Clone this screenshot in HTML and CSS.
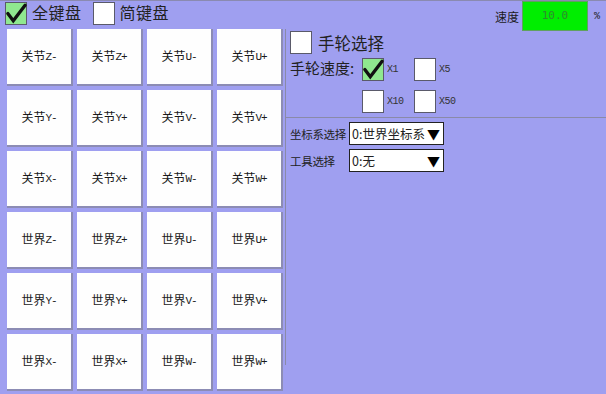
FILE: index.html
```html
<!DOCTYPE html>
<html>
<head>
<meta charset="utf-8">
<link rel="stylesheet" href="styles.css">
</head>
<body>
<div class="screen">
  <div class="topbar">
    <div class="chk on big"><svg viewBox="0 0 22 22"><polyline points="2,11 8,19 21,2" /></svg></div>
    <span class="lbl big-lbl">全键盘</span>
    <div class="chk big gap"></div>
    <span class="lbl big-lbl">简键盘</span>
    <div class="spacer"></div>
    <span class="speed-lbl">速度</span>
    <div class="speed-box">10.0</div>
    <span class="pct">%</span>
  </div>
  <div class="main">
    <div class="grid">
      <button class="key"><span>关节<i>Z-</i></span></button>
      <button class="key"><span>关节<i>Z+</i></span></button>
      <button class="key"><span>关节<i>U-</i></span></button>
      <button class="key"><span>关节<i>U+</i></span></button>
      <button class="key"><span>关节<i>Y-</i></span></button>
      <button class="key"><span>关节<i>Y+</i></span></button>
      <button class="key"><span>关节<i>V-</i></span></button>
      <button class="key"><span>关节<i>V+</i></span></button>
      <button class="key"><span>关节<i>X-</i></span></button>
      <button class="key"><span>关节<i>X+</i></span></button>
      <button class="key"><span>关节<i>W-</i></span></button>
      <button class="key"><span>关节<i>W+</i></span></button>
      <button class="key"><span>世界<i>Z-</i></span></button>
      <button class="key"><span>世界<i>Z+</i></span></button>
      <button class="key"><span>世界<i>U-</i></span></button>
      <button class="key"><span>世界<i>U+</i></span></button>
      <button class="key"><span>世界<i>Y-</i></span></button>
      <button class="key"><span>世界<i>Y+</i></span></button>
      <button class="key"><span>世界<i>V-</i></span></button>
      <button class="key"><span>世界<i>V+</i></span></button>
      <button class="key"><span>世界<i>X-</i></span></button>
      <button class="key"><span>世界<i>X+</i></span></button>
      <button class="key"><span>世界<i>W-</i></span></button>
      <button class="key"><span>世界<i>W+</i></span></button>
    </div>
    <div class="panel">
      <div class="wheel">
        <div class="row-sel">
          <div class="chk big"></div>
          <span class="lbl wheel-lbl">手轮选择</span>
        </div>
        <div class="speeds">
          <span class="lbl speed-title">手轮速度:</span>
          <div class="opts">
            <div class="opt"><div class="chk on big"><svg viewBox="0 0 22 22"><polyline points="2,11 8,19 21,2" /></svg></div><span class="x">X1</span></div>
            <div class="opt"><div class="chk big"></div><span class="x">X5</span></div>
            <div class="opt"><div class="chk big"></div><span class="x">X10</span></div>
            <div class="opt"><div class="chk big"></div><span class="x">X50</span></div>
          </div>
        </div>
      </div>
      <div class="selects">
        <div class="sel-row">
          <span class="sel-lbl">坐标系选择</span>
          <div class="select"><span>0:世界坐标系</span><span class="arrow">▼</span></div>
        </div>
        <div class="sel-row">
          <span class="sel-lbl">工具选择</span>
          <div class="select"><span>0:无</span><span class="arrow">▼</span></div>
        </div>
      </div>
    </div>
  </div>
</div>
</body>
</html>
```

FILE: styles.css
```css
* { box-sizing: border-box; }
html, body {
  margin: 0;
  padding: 0;
  background: #9f9ff0;
}
body {
  width: 606px;
  height: 394px;
  overflow: hidden;
  font-family: "Noto Sans CJK SC", "Liberation Sans", sans-serif;
  color: #1c1c1c;
}
.screen {
  width: 606px;
  height: 394px;
  border-top: 1px solid #8a8ab0;
  display: flex;
  flex-direction: column;
}
.topbar {
  height: 28px;
  display: flex;
  align-items: flex-start;
  padding-left: 5px;
}
.chk {
  width: 22px;
  height: 23px;
  background: #fff;
  border: 1px solid #5a5a6a;
  flex: none;
}
.topbar .chk { margin-top: 1px; }
.chk.gap { margin-left: 11px; }
.chk.on {
  background: #8fe88f;
}
.chk svg {
  display: block;
  width: 100%;
  height: 100%;
  overflow: visible;
}
.chk svg polyline {
  fill: none;
  stroke: #111;
  stroke-width: 3.6;
  stroke-linecap: round;
  stroke-linejoin: miter;
}
.lbl {
  color: #222;
  white-space: nowrap;
}
.big-lbl {
  font-size: 16px;
  line-height: 22px;
  margin-left: 5px;
  letter-spacing: 0.5px;
}
.spacer { flex: 1; }
.speed-lbl {
  font-size: 12px;
  line-height: 16px;
  margin-top: 8px;
  margin-right: 3px;
}
.speed-box {
  width: 66px;
  height: 30px;
  background: #00ee00;
  border: 1px solid #60a060;
  color: #2f8a2f;
  font-family: "DejaVu Sans Mono", monospace;
  font-size: 11px;
  text-align: center;
  line-height: 28px;
  flex: none;
}
.pct {
  font-family: "Liberation Mono", monospace;
  font-size: 10px;
  width: 18px;
  text-align: center;
  margin-top: 10px;
}
.main {
  flex: 1;
  display: flex;
}
.grid {
  margin-left: 7px;
  display: grid;
  grid-template-columns: repeat(4, 66px);
  grid-template-rows: repeat(6, 57px);
  gap: 4px;
  flex: none;
}
.key {
  background: #fefefe;
  border: none;
  border-right: 2px solid #8c8cb4;
  border-bottom: 2px solid #8c8cb4;
  padding: 0;
  margin: 0;
  font-family: "Noto Sans CJK SC", sans-serif;
  font-size: 12px;
  color: #1a1a1a;
  display: flex;
  align-items: center;
  justify-content: center;
}
.key span {
  white-space: nowrap;
  line-height: 16px;
}
.key i {
  font-style: normal;
  font-family: "Liberation Mono", monospace;
  font-size: 11px;
  letter-spacing: -1.2px;
  vertical-align: 1px;
}
.panel {
  margin-left: 2px;
  flex: 1;
  display: flex;
  flex-direction: column;
  align-self: flex-start;
  height: 336px;
  border-left: 1px solid #8a8aa8;
}
.wheel {
  padding: 2px 0 0 4px;
  height: 89px;
  border-bottom: 1px solid #8a8aa8;
}
.row-sel {
  display: flex;
  align-items: center;
}
.wheel-lbl {
  font-size: 16.5px;
  margin-left: 6px;
  line-height: 22px;
}
.speeds {
  display: flex;
  margin-top: 4px;
}
.speed-title {
  font-size: 15px;
  line-height: 20px;
  width: 72px;
  flex: none;
}
.opts {
  display: grid;
  grid-template-columns: 52px 52px;
  row-gap: 9px;
}
.opt {
  display: flex;
  align-items: center;
}
.x {
  font-family: "Liberation Mono", monospace;
  font-size: 10px;
  margin-left: 3px;
  letter-spacing: -0.5px;
  color: #333;
}
.selects {
  padding: 4px 0 0 4px;
  display: flex;
  flex-direction: column;
  gap: 4px;
}
.sel-row {
  display: flex;
  align-items: center;
}
.sel-lbl {
  font-size: 11.5px;
  width: 59px;
  flex: none;
  white-space: nowrap;
  letter-spacing: -0.3px;
  color: #222;
}
.select {
  width: 95px;
  height: 23px;
  background: #fff;
  border: 1px solid #222;
  display: flex;
  align-items: center;
  justify-content: space-between;
  padding: 0 3px 0 2px;
  font-size: 12.5px;
  color: #222;
}
.arrow {
  font-size: 13px;
  color: #000;
}
```
